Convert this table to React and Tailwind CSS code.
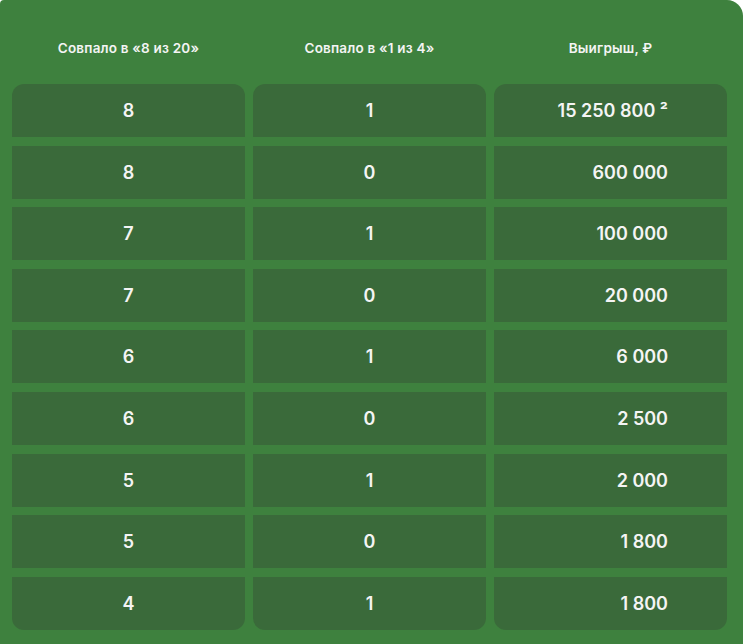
import React from "react";

const rows = [
  ["8", "1", "15 250 800 ²"],
  ["8", "0", "600 000"],
  ["7", "1", "100 000"],
  ["7", "0", "20 000"],
  ["6", "1", "6 000"],
  ["6", "0", "2 500"],
  ["5", "1", "2 000"],
  ["5", "0", "1 800"],
  ["4", "1", "1 800"],
];

const headers = ["Совпало в «8 из 20»", "Совпало в «1 из 4»", "Выигрыш, ₽"];

export default function App() {
  return (
    <div
      className="w-[743px] h-[644px] bg-white overflow-hidden"
      style={{ fontFamily: "Inter, 'Noto Sans', sans-serif" }}
    >
      <div className="w-full h-full bg-[#3e813e] rounded-tr-2xl rounded-tl-[4px] pl-3 pr-4 text-[#f4f4f4]">
        <div className="grid grid-cols-3 gap-2 h-[84px] pt-[38px]">
          {headers.map((h) => (
            <div key={h} className="text-center text-[13.5px] leading-[20px] font-semibold tracking-[0.2px]">
              {h}
            </div>
          ))}
        </div>
        <div className="grid grid-cols-3 gap-2">
          {[0, 1, 2].map((c) => (
            <div key={c} className="flex flex-col gap-[8.6px]">
              {rows.map((r, i) => (
                <div
                  key={i}
                  className={
                    "h-[53px] bg-[#3a6a3a] flex items-center text-[18px] font-semibold " +
                    (i === 0 ? "rounded-t-xl " : "") +
                    (i === rows.length - 1 ? "rounded-b-xl " : "") +
                    (c === 2 ? "justify-end pr-[59px]" : "justify-center")
                  }
                >
                  {r[c]}
                </div>
              ))}
            </div>
          ))}
        </div>
      </div>
    </div>
  );
}
